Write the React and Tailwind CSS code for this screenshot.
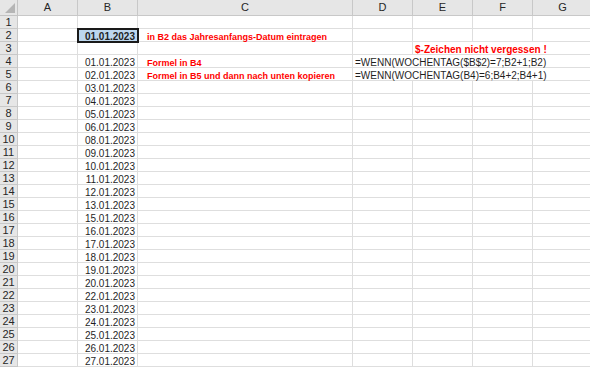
const dates = [
  '01.01.2023', '02.01.2023', '03.01.2023', '04.01.2023', '05.01.2023', '06.01.2023',
  '08.01.2023', '09.01.2023', '10.01.2023', '11.01.2023', '12.01.2023', '13.01.2023',
  '15.01.2023', '16.01.2023', '17.01.2023', '18.01.2023', '19.01.2023', '20.01.2023',
  '22.01.2023', '23.01.2023', '24.01.2023', '25.01.2023', '26.01.2023', '27.01.2023',
];

const letters = ['A', 'B', 'C', 'D', 'E', 'F', 'G'];

const cell = 'border-r border-b border-[#dedede] px-[2px] pt-[2px] text-[10px] leading-[11px] whitespace-nowrap text-[#1f1f1f]';
const red = 'text-[#ff0000] font-bold text-[9px]';

const Corner = () => (
  <div className="bg-[#e6e6e6] border-r border-b border-[#c4c4c4] flex items-end justify-end p-[2px]">
    <svg width="10" height="10" viewBox="0 0 10 10">
      <polygon points="10,0 10,10 0,10" fill="#b5b5b5" />
    </svg>
  </div>
);

const RowHead = ({ n }) => (
  <div className="bg-[#e6e6e6] border-r border-b border-[#c8c8c8] text-[11px] leading-[12px] text-center text-[#262626]">
    {n}
  </div>
);

const Row = ({ n }) => {
  const date = n >= 4 ? dates[n - 4] : null;

  if (n === 2) {
    return (
      <>
        <RowHead n={n} />
        <div className={cell}></div>
        <div className={`${cell} bg-[#bdd7ee] font-bold text-right outline-2 outline-[#1a1a1a] -outline-offset-1 relative z-10`}>
          01.01.2023
        </div>
        <div className={`${cell} pl-[9px]`}>
          <span className={red}>in B2 das Jahresanfangs-Datum eintragen</span>
        </div>
        <div className={cell}></div>
        <div className={cell}></div>
        <div className={cell}></div>
        <div className={cell}></div>
      </>
    );
  }

  if (n === 3) {
    return (
      <>
        <RowHead n={n} />
        <div className={cell}></div>
        <div className={cell}></div>
        <div className={cell}></div>
        <div className={cell}></div>
        <div className={`${cell} col-span-3 pt-[1px]`}>
          <span className="text-[#ff0000] font-bold text-[10px]">$-Zeichen nicht vergessen !</span>
        </div>
      </>
    );
  }

  if (n === 4 || n === 5) {
    return (
      <>
        <RowHead n={n} />
        <div className={cell}></div>
        <div className={`${cell} text-right`}>{date}</div>
        <div className={`${cell} pl-[9px]`}>
          <span className={red}>
            {n === 4 ? 'Formel in B4' : 'Formel in B5 und dann nach unten kopieren'}
          </span>
        </div>
        <div className={`${cell} col-span-4`}>
          {n === 4 ? '=WENN(WOCHENTAG($B$2)=7;B2+1;B2)' : '=WENN(WOCHENTAG(B4)=6;B4+2;B4+1)'}
        </div>
      </>
    );
  }

  return (
    <>
      <RowHead n={n} />
      <div className={cell}></div>
      <div className={`${cell} text-right`}>{date}</div>
      <div className={cell}></div>
      <div className={cell}></div>
      <div className={cell}></div>
      <div className={cell}></div>
      <div className={cell}></div>
    </>
  );
};

const App = () => {
  const rows = Array.from({ length: 27 }, (_, i) => i + 1);

  return (
    <div className="w-[590px] h-[368px] overflow-hidden bg-white font-['Liberation_Sans',Arial,sans-serif]">
      <div className="grid w-[593px] grid-cols-[18px_60px_60px_215px_60px_60px_60px_60px] grid-rows-[16px] auto-rows-[13px]">
        <Corner />
        {letters.map((l) => (
          <div
            key={l}
            className="bg-[#e6e6e6] border-r border-b border-[#c8c8c8] text-[11px] leading-[15px] text-center text-[#262626]"
          >
            {l}
          </div>
        ))}
        {rows.map((n) => (
          <Row key={n} n={n} />
        ))}
      </div>
    </div>
  );
};

export default App;
